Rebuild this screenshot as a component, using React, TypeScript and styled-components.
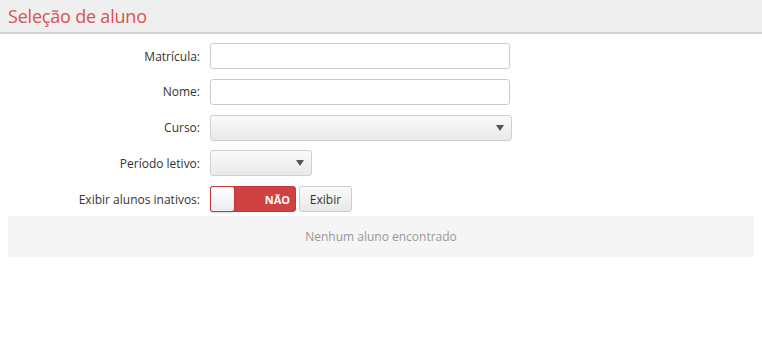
import React from "react";
import styled, { createGlobalStyle } from "styled-components";

const Global = createGlobalStyle`
  html, body {
    margin: 0;
    padding: 0;
    background: #fff;
    font-family: "Open Sans", "Liberation Sans", sans-serif;
    color: #333;
  }
`;

const Header = styled.header`
  height: 32px;
  background: #efefef;
  border-bottom: 2px solid #d2d2d2;
  display: flex;
  align-items: center;
  padding: 0 8px;
  h1 {
    margin: 0;
    font-size: 18px;
    font-weight: 400;
    color: #d9534f;
    letter-spacing: -0.2px;
  }
`;

const Form = styled.div`
  display: grid;
  grid-template-columns: 200px auto;
  column-gap: 10px;
  row-gap: 9.75px;
  padding-top: 9px;
  align-items: center;
  justify-items: start;
`;

const Label = styled.label`
  justify-self: end;
  font-size: 12px;
  color: #333;
`;

const Input = styled.input<{ $w: number }>`
  box-sizing: border-box;
  width: ${(p) => p.$w}px;
  height: 26px;
  border: 1px solid #ccc;
  border-radius: 3px;
  background: #fff;
  padding: 0 6px;
  font-family: inherit;
  font-size: 12px;
  outline: none;
`;

const Select = styled.div<{ $w: number }>`
  box-sizing: border-box;
  width: ${(p) => p.$w}px;
  height: 26px;
  border: 1px solid #d0d0d0;
  border-radius: 3px;
  background: linear-gradient(#fafafa, #e9e9e9);
  display: flex;
  align-items: center;
  justify-content: flex-end;
  padding-right: 7px;
  &::after {
    content: "";
    border-left: 4px solid transparent;
    border-right: 4px solid transparent;
    border-top: 6px solid #555;
  }
`;

const Controls = styled.div`
  display: flex;
  gap: 3px;
  align-items: center;
`;

const Switch = styled.div`
  box-sizing: border-box;
  width: 86px;
  height: 26px;
  border-radius: 3px;
  background: #d04242;
  border: 1px solid #c23a3a;
  display: flex;
  align-items: center;
  justify-content: space-between;
  padding-right: 5px;
  span {
    color: #fff;
    font-size: 11px;
    font-weight: 700;
  }
`;

const Knob = styled.div`
  box-sizing: border-box;
  width: 25px;
  height: 26px;
  margin: -1px 0 0 -1px;
  align-self: flex-start;
  border: 1px solid #c23a3a;
  border-radius: 3px;
  background: linear-gradient(#fff, #ececec);
  box-shadow: 0 1px 2px rgba(0, 0, 0, 0.15);
`;

const Button = styled.button`
  box-sizing: border-box;
  height: 26px;
  width: 53px;
  border: 1px solid #ccc;
  border-radius: 3px;
  background: linear-gradient(#fbfbfb, #e8e8e8);
  font-family: inherit;
  font-size: 12px;
  color: #333;
  padding: 0;
`;

const Empty = styled.div`
  margin: 4px 8px 0;
  height: 41px;
  background: #f5f5f5;
  display: flex;
  align-items: center;
  justify-content: center;
  font-size: 12px;
  color: #999;
`;

export default function App() {
  return (
    <>
      <Global />
      <Header>
        <h1>Seleção de aluno</h1>
      </Header>
      <Form>
        <Label>Matrícula:</Label>
        <Input $w={300} />
        <Label>Nome:</Label>
        <Input $w={300} />
        <Label>Curso:</Label>
        <Select $w={302} />
        <Label>Período letivo:</Label>
        <Select $w={102} />
        <Label>Exibir alunos inativos:</Label>
        <Controls>
          <Switch>
            <Knob />
            <span>NÃO</span>
          </Switch>
          <Button>Exibir</Button>
        </Controls>
      </Form>
      <Empty>Nenhum aluno encontrado</Empty>
    </>
  );
}
